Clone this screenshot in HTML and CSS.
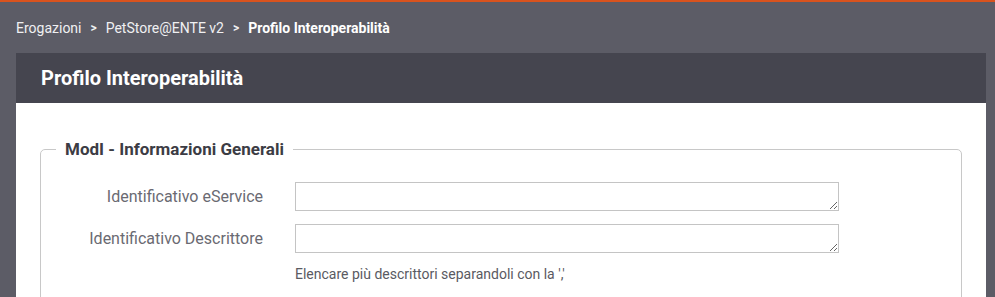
FILE: index.html
```html
<!DOCTYPE html>
<html lang="it">
<head>
<meta charset="utf-8">
<title>Profilo Interoperabilità</title>
<link rel="stylesheet" href="styles.css">
</head>
<body>
<div class="page">
  <nav class="breadcrumb">
    <span class="crumb">Erogazioni</span>
    <span class="sep">&gt;</span>
    <span class="crumb">PetStore@ENTE v2</span>
    <span class="sep">&gt;</span>
    <span class="crumb current">Profilo Interoperabilità</span>
  </nav>
  <section class="panel">
    <header class="panel-header">Profilo Interoperabilità</header>
    <div class="panel-body">
      <fieldset class="group">
        <legend>ModI - Informazioni Generali</legend>
        <div class="row">
          <label class="label">Identificativo eService</label>
          <div class="field"><textarea class="input"></textarea></div>
        </div>
        <div class="row">
          <label class="label">Identificativo Descrittore</label>
          <div class="field">
            <textarea class="input"></textarea>
            <div class="note">Elencare più descrittori separandoli con la ','</div>
          </div>
        </div>
      </fieldset>
    </div>
  </section>
</div>
</body>
</html>
```
FILE: styles.css
```css
html, body {
  margin: 0;
  padding: 0;
  height: 100%;
}
body {
  background: #5c5c66;
  font-family: Roboto, "Liberation Sans", sans-serif;
  overflow: hidden;
}
.page {
  border-top: 2px solid #d9531e;
  padding: 0 9px 0 16px;
}
.breadcrumb {
  display: flex;
  align-items: center;
  height: 51px;
  font-size: 14px;
  color: #f0f0f2;
}
.sep {
  margin: 0 9px 0 9px;
  font-size: 12px;
  font-weight: 700;
}
.current {
  font-weight: 700;
  color: #ffffff;
}
.panel {
  background: #ffffff;
}
.panel-header {
  background: #45454f;
  color: #ffffff;
  height: 50px;
  display: flex;
  align-items: center;
  padding-left: 25px;
  font-size: 20px;
  font-weight: 700;
}
.panel-body {
  padding: 36px 24px 24px 24px;
}
.group {
  margin: 0;
  border: 1px solid #c8c8c8;
  border-radius: 5px;
  padding: 23px 0 24px 0;
  min-width: 0;
}
.group legend {
  margin-left: 15px;
  padding: 0 9px;
  font-size: 17px;
  font-weight: 700;
  color: #3c3c44;
}
.row {
  display: flex;
  align-items: flex-start;
  margin-bottom: 13px;
}
.label {
  width: 222px;
  text-align: right;
  padding-right: 32px;
  font-size: 16px;
  color: #6a6a72;
  line-height: 29px;
}
.field {
  display: flex;
  flex-direction: column;
}
.input {
  display: block;
  width: 544px;
  height: 29px;
  box-sizing: border-box;
  border: 1px solid #c4c4c4;
  border-radius: 0;
  margin: 0;
  padding: 2px 4px;
  resize: vertical;
  font-family: inherit;
}
.note {
  margin-top: 13px;
  font-size: 14px;
  color: #5a5a62;
}
```
